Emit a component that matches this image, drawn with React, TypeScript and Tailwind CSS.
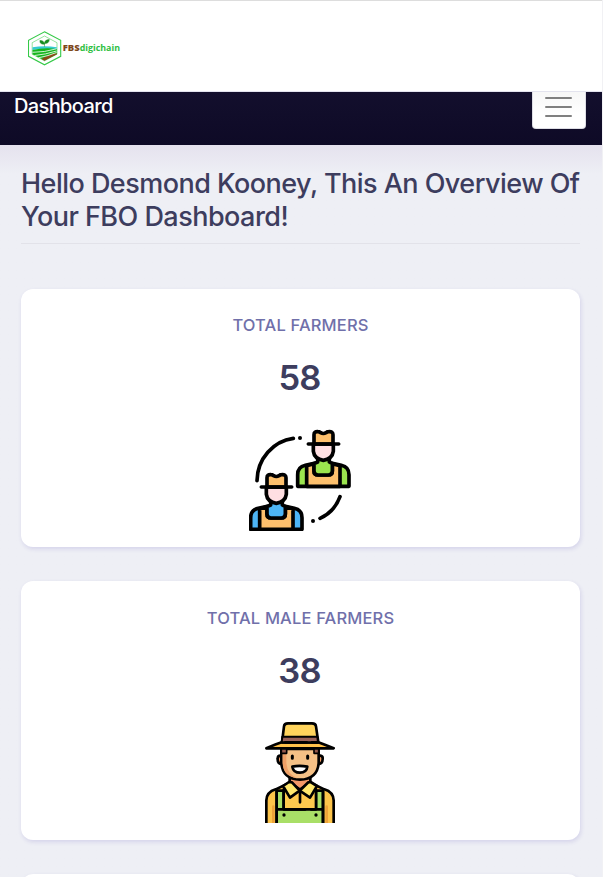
import type { ReactNode } from "react";

function Logo() {
  return (
    <svg className="h-[40px] w-[100px]" viewBox="0 0 100 40">
      <path d="M16.5 2.8 32.7 11.3V27.3L16.5 35.8 0.5 27.3V11.3Z" fill="#fff" stroke="#35c948" strokeWidth="1.1" />
      <path d="M16.5 7 29 13.7V25.2L16.5 31.8 4.2 25.2V13.7Z" fill="#fff" stroke="#65d773" strokeWidth="0.7" />
      <path d="M4.5 18.2Q16.5 16.5 28.8 18.2V21Q16.5 19 4.5 21Z" fill="#36cbd0" />
      <path d="M4.5 21Q16.5 18.2 28.8 20V25.2L16.5 31.6 4.5 25.2Z" fill="#16b51c" />
      <path d="M13.5 30Q21.5 25 28.8 24.3V25.2L16.5 31.7Z" fill="#8a4a16" />
      <path d="M4.5 23.3Q16.5 23.4 28.5 19.8M6.5 26.5Q17.5 25.5 28.5 22M10.5 28.8Q20.5 27 28.5 23.5" fill="none" stroke="#fff" strokeWidth="0.8" />
      <path d="M16.5 17.7V14M16.5 15.3Q11.5 15.5 11.9 11.5 16 11.2 16.5 15.3ZM16.5 14.5Q16.5 10.7 21.3 10.6 21.1 14.7 16.5 14.5Z" fill="#168d20" stroke="#168d20" strokeWidth="0.5" />
      <text x="34.7" y="21.5" fontFamily="Open Sans, sans-serif" fontSize="8.6" fontWeight="800" fill="#7d481b" textLength="17" lengthAdjust="spacingAndGlyphs">FBS</text>
      <text x="51.7" y="21.5" fontFamily="Open Sans, sans-serif" fontSize="8.6" fontWeight="700" fill="#2fc043" textLength="40.3" lengthAdjust="spacingAndGlyphs">digichain</text>
    </svg>
  );
}

function Person({ x, y, shirt }: { x: number; y: number; shirt: string }) {
  return (
    <g transform={`translate(${x} ${y})`} stroke="#000" strokeWidth="11" strokeLinejoin="round" strokeLinecap="round">
      <path d="M5 170V135Q5 112 28 107L55 101H109L136 107Q159 112 159 135V170Z" fill={shirt} />
      <path d="M32 108V170H132V108L109 102V124Q109 136 97 136H66Q54 136 54 124V102Z" fill="#fdc06d" />
      <path d="M54 102 65 97V84H100V97L109 102V124Q109 136 97 136H66Q54 136 54 124Z" fill={shirt} />
      <path d="M52 43V65Q55 88 82 92Q109 88 112 65V43Z" fill="#ffdfe2" />
      <path d="M54 43V15Q54 5 66 6Q70 6 74 9Q82 14 90 9Q94 6 98 6Q111 5 111 15V43Z" fill="#fdc06d" />
      <path d="M37 43H128" />
    </g>
  );
}

function FarmersIcon() {
  return (
    <svg className="h-[102px] w-[103px]" viewBox="27 27 309 306">
      <path d="M51 182C52 116 100 63 160 55M240 295Q283 276 300 230" fill="none" stroke="#000" strokeWidth="11" strokeLinecap="round" />
      <circle cx="180" cy="54" r="6" />
      <circle cx="219" cy="303" r="6" />
      <Person x={168} y={29} shirt="#9be44e" />
      <Person x={27} y={158} shirt="#4db5f5" />
    </svg>
  );
}

function MaleFarmerIcon() {
  return (
    <svg className="mr-[2px] h-[101px] w-[70px]" viewBox="30 30 210 303">
      <g stroke="#000" strokeWidth="8" strokeLinecap="round" strokeLinejoin="round">
        <path d="M34 340V265Q35 240 62 232L96 216H174L208 232Q235 240 236 265V340Z" fill="#fdc44a" />
        <path d="M55 284V335M215 284V335" stroke="#eda33a" />
        <path d="M65 236H86V292H183V236H204V340H65Z" fill="#a9df67" />
        <path d="M88 229H181V288H88Z" fill="#ffc94e" stroke="none" />
        <path d="M65 236V335M86 233V290M183 233V290M204 236V335" fill="none" />
        <path d="M104 189V211L135 233 166 211V189Z" fill="#f39868" />
        <path d="M79 131H76Q68 131 68 140Q67 156 82 157M189 131H196Q204 132 203 141Q203 156 188 157" fill="#ef9a62" />
        <path d="M79 111V153Q83 202 135 203Q187 202 191 153V111Z" fill="#f5c186" />
        <path d="M83 114H94V154Q98 189 127 198Q84 194 83 153Z" fill="#eea066" stroke="none" />
        <path d="M79 108H95V124H79ZM177 108H191V124H177Z" fill="#92584a" strokeWidth="5" />
        <path d="M34 109Q65 96 80 91H190Q209 98 236 109Z" fill="#ffc14a" />
        <path d="M81 91 87 43Q88 34 99 34H171Q182 34 183 43L190 91Z" fill="#ffd45c" />
        <path d="M82 74H187L189 91H80Z" fill="#9a6258" strokeWidth="6" />
        <path d="M91 91H155M171 91H187" />
        <path d="M112 132V139M158 132V139" strokeWidth="9" />
        <path d="M112 164Q133 159 157 164Q155 182 135 182T112 164Z" fill="#fff" />
        <path d="M102 210 84 222 105 257 134 236 111 211ZM167 210 186 222 165 257 134 236 160 211Z" fill="#ffe76d" />
        <path d="M135 239V271M70 292H151M168 292H203" fill="none" />
      </g>
      <circle cx="87" cy="309" r="5" />
      <circle cx="183" cy="309" r="5" />
    </svg>
  );
}

function StatCard({ title, value, children }: { title?: string; value?: string; children?: ReactNode }) {
  return (
    <section className="flex h-[258.6px] shrink-0 flex-col items-center rounded-xl bg-white shadow-[1px_2px_4px_rgba(80,70,180,0.16)]">
      <h2 className="mt-[24.3px] text-[16.5px] leading-6 font-medium tracking-[0.16px] text-[#7070aa]">{title}</h2>
      <p className="mt-[21px] mr-[2px] h-10 text-[34.5px] leading-10 font-semibold tracking-[-0.8px] text-[#3d3d5e]">{value}</p>
      <div className="mt-[31px]">{children}</div>
    </section>
  );
}

export default function App() {
  return (
    <div className="h-[877px] w-[603px] overflow-hidden bg-[#f1f1f4] font-['Inter',sans-serif]">
      <div className="flex h-full w-[602px] flex-col bg-[#eeeff5]">
        <header className="relative z-10 h-[92px] shrink-0 border-t border-b border-t-[#dddddd] border-b-[#e3e3ee] bg-white pt-[28px] pl-7">
          <Logo />
        </header>
        <nav className="flex h-[53px] shrink-0 items-start justify-between bg-linear-to-b from-[#130f2d] to-[#0e0a26] pr-4 pl-[14px]">
          <h1 className="text-[20px] leading-7 font-medium tracking-[-0.62px] text-white">Dashboard</h1>
          <button aria-label="Toggle navigation" className="flex h-[37px] w-[54px] flex-col items-center gap-[7px] rounded-b border border-t-0 border-[#dedee5] bg-linear-to-b from-[#f7f7f7] to-white to-60% pt-[5px] pr-px">
            <span className="h-[2px] w-[27px] rounded bg-[#808080]" />
            <span className="h-[2px] w-[27px] rounded bg-[#808080]" />
            <span className="h-[2px] w-[27px] rounded bg-[#808080]" />
          </button>
        </nav>
        <main className="flex flex-1 flex-col overflow-hidden bg-linear-to-b from-[#e5e2ee] via-[#eeeff5] via-[4%] to-[#eeeff5] pt-[23px] pr-[22px] pl-[21px]">
          <div className="h-[76px] shrink-0 border-b border-[#e2e2e9]">
            <p className="-mt-px text-[27px] leading-[33px] font-medium tracking-[-0.53px] whitespace-nowrap text-[#3d3d5e]">
              Hello Desmond Kooney, This An Overview Of<br />Your FBO Dashboard!
            </p>
          </div>
          <div className="mt-[44.7px] flex flex-col gap-[34px]">
            <StatCard title="TOTAL FARMERS" value="58"><FarmersIcon /></StatCard>
            <StatCard title="TOTAL MALE FARMERS" value="38"><MaleFarmerIcon /></StatCard>
            <StatCard />
          </div>
        </main>
      </div>
    </div>
  );
}
